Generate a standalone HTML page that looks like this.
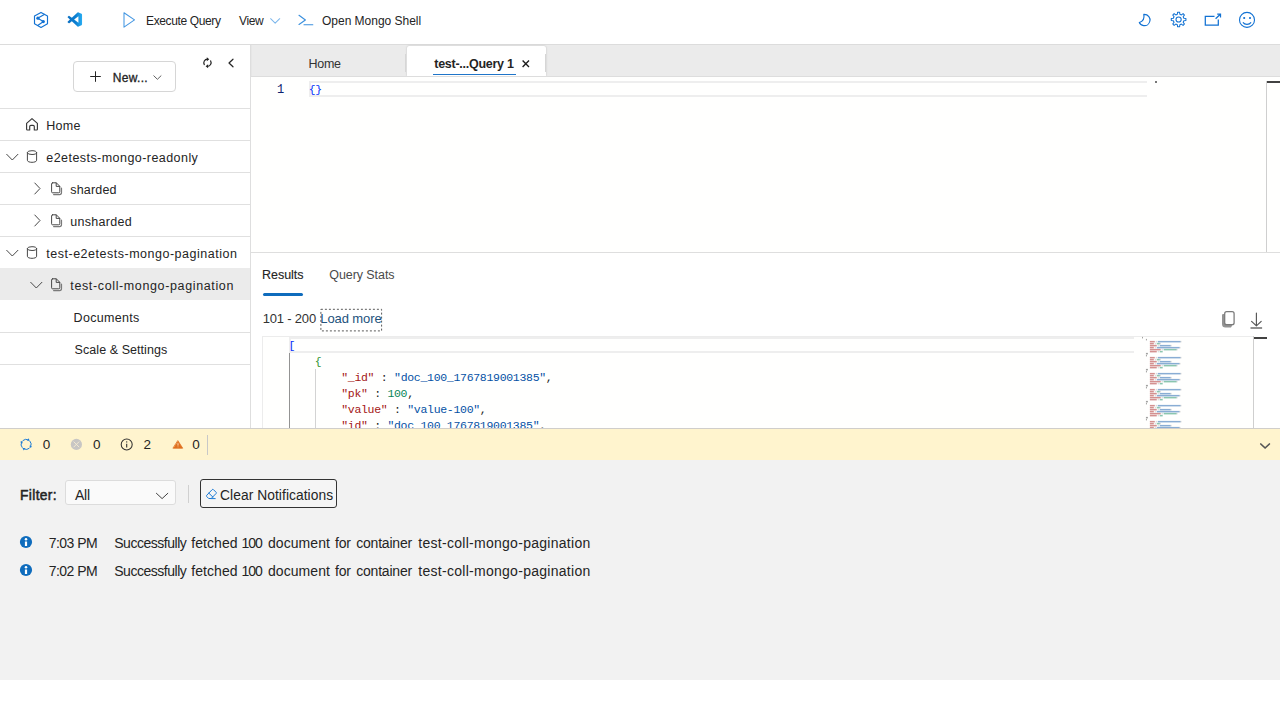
<!DOCTYPE html>
<html><head><meta charset="utf-8"><title>Data Explorer</title>
<style>
*{box-sizing:border-box;margin:0;padding:0}
html,body{width:1280px;height:720px;overflow:hidden;background:#fff;font-family:"Liberation Sans",sans-serif}
.a{position:absolute}
.t{position:absolute;white-space:pre;line-height:20px;font-family:"Liberation Sans",sans-serif}
.t.m{font-family:"Liberation Mono",monospace}
svg{position:absolute;overflow:visible}
.row{position:absolute;left:0;width:250px;height:1px;background:#e0e0e0}
.code{position:absolute;font:11.5px/16px "Liberation Mono",monospace;letter-spacing:-0.3px;white-space:pre;color:#222}
.k{color:#a31515}.s{color:#0451a5}.n{color:#098658}
</style></head><body>
<!-- top command bar -->
<div class="a" style="left:0;top:0;width:1280px;height:44px;background:#fff"></div>
<div class="a" style="left:0;top:44px;width:1280px;height:1px;background:#dcdcdc"></div>

<!-- sidebar -->
<div class="a" style="left:0;top:45px;width:250px;height:383px;background:#fff"></div>
<div class="a" style="left:250px;top:45px;width:1px;height:383px;background:#dedede"></div><div class="a" style="left:251px;top:45px;width:1px;height:32px;background:#e6e6e6"></div>
<div class="a" style="left:73px;top:61px;width:103px;height:31px;border:1px solid #d6d6d6;border-radius:4px;background:#fff"></div>
<div class="a" style="left:0;top:268px;width:250px;height:32px;background:#ebebeb"></div>
<div class="row" style="top:108px"></div><div class="row" style="top:140px"></div><div class="row" style="top:172px"></div>
<div class="row" style="top:204px"></div><div class="row" style="top:236px"></div>
<div class="row" style="top:332px"></div><div class="row" style="top:364px"></div>

<!-- tab strip -->
<div class="a" style="left:252px;top:45px;width:1028px;height:31px;background:#ebebeb"></div>
<div class="a" style="left:407px;top:46px;width:139px;height:30px;background:#fff;border-radius:2px 2px 0 0;box-shadow:0 0 2px rgba(0,0,0,.22)"></div>
<div class="a" style="left:251px;top:76px;width:1029px;height:1px;background:#dddddd"></div><div class="a" style="left:405px;top:54px;width:1px;height:18px;background:#d6d6d6"></div><div class="a" style="left:545px;top:54px;width:1px;height:18px;background:#d6d6d6"></div><div class="a" style="left:433.3px;top:73.5px;width:82.4px;height:1.45px;background:#1f75c9"></div>

<!-- query editor -->
<div class="a" style="left:251px;top:77px;width:1029px;height:175px;background:#fffffe"></div>
<div class="a" style="left:309px;top:81px;width:838px;height:16px;border:2px solid #eeeeee;border-right:none"></div>
<div class="a" style="left:1155px;top:81px;width:2px;height:2px;background:#777"></div>
<div class="a" style="left:1266px;top:81px;width:1px;height:171px;background:#cfcfcf"></div>
<div class="a" style="left:1267px;top:81px;width:13px;height:2px;background:#424242"></div>
<div class="a" style="left:251px;top:252px;width:1029px;height:1px;background:#dedede"></div>

<!-- results -->
<div class="a" style="left:262.5px;top:293px;width:40.5px;height:3px;border-radius:2px;background:#0f6cbd"></div>
<svg style="left:0;top:0" width="1280" height="720"><rect x="320.9" y="309.3" width="60.7" height="21.6" fill="none" stroke="#5a5a5a" stroke-width="1" stroke-dasharray="2 2"/></svg>

<!-- results editor -->
<div class="a" style="left:262px;top:336px;width:1005px;height:92px;overflow:hidden">
  <div class="a" style="left:0;top:0;width:991px;height:92px;background:#fffffe;border-top:1px solid #ececec;border-left:1px solid #ececec"></div>
  <div class="a" style="left:27px;top:1px;width:845px;height:16px;border:2px solid #eeeeee;border-right:none"></div>
  <div class="a" style="left:27px;top:17px;width:1px;height:80px;background:#939393"></div>
  <div class="a" style="left:53px;top:33px;width:1px;height:64px;background:#d3d3d3"></div>
  <div class="code" style="left:26.4px;top:2px"><span style="color:#0431fa">[</span>
    <span style="color:#319331">{</span>
        <span class="k">"_id"</span> : <span class="s">"doc_100_1767819001385"</span>,
        <span class="k">"pk"</span> : <span class="n">100</span>,
        <span class="k">"value"</span> : <span class="s">"value-100"</span>,
        <span class="k">"id"</span> : <span class="s">"doc_100_1767819001385"</span>,
        <span class="k">"timestamp"</span> : <span class="n">1767819001385</span>,</div>
  <svg style="left:880px;top:0" width="110" height="92" viewBox="0 0 110 92"><rect x="0.00" y="0.9" width="0.98" height="1.5" fill="#444" opacity="0.5"/><rect x="3.94" y="2.9" width="0.98" height="1.5" fill="#444" opacity="0.5"/><rect x="7.88" y="4.9" width="4.92" height="1.5" fill="#a31515" opacity="0.47"/><rect x="13.79" y="4.9" width="0.98" height="1.5" fill="#333333" opacity="0.22"/><rect x="15.76" y="4.9" width="22.66" height="1.5" fill="#0451a5" opacity="0.47"/><rect x="38.41" y="4.9" width="0.98" height="1.5" fill="#333333" opacity="0.22"/><rect x="7.88" y="6.9" width="3.94" height="1.5" fill="#a31515" opacity="0.47"/><rect x="12.80" y="6.9" width="0.98" height="1.5" fill="#333333" opacity="0.22"/><rect x="14.78" y="6.9" width="2.96" height="1.5" fill="#098658" opacity="0.47"/><rect x="17.73" y="6.9" width="0.98" height="1.5" fill="#333333" opacity="0.22"/><rect x="7.88" y="8.9" width="6.89" height="1.5" fill="#a31515" opacity="0.47"/><rect x="15.76" y="8.9" width="0.98" height="1.5" fill="#333333" opacity="0.22"/><rect x="17.73" y="8.9" width="10.83" height="1.5" fill="#0451a5" opacity="0.47"/><rect x="28.57" y="8.9" width="0.98" height="1.5" fill="#333333" opacity="0.22"/><rect x="7.88" y="10.9" width="3.94" height="1.5" fill="#a31515" opacity="0.47"/><rect x="12.80" y="10.9" width="0.98" height="1.5" fill="#333333" opacity="0.22"/><rect x="14.78" y="10.9" width="22.66" height="1.5" fill="#0451a5" opacity="0.47"/><rect x="37.43" y="10.9" width="0.98" height="1.5" fill="#333333" opacity="0.22"/><rect x="7.88" y="12.9" width="10.83" height="1.5" fill="#a31515" opacity="0.47"/><rect x="19.70" y="12.9" width="0.98" height="1.5" fill="#333333" opacity="0.22"/><rect x="21.67" y="12.9" width="12.80" height="1.5" fill="#098658" opacity="0.47"/><rect x="34.48" y="12.9" width="0.98" height="1.5" fill="#333333" opacity="0.22"/><rect x="7.88" y="14.9" width="6.89" height="1.5" fill="#a31515" opacity="0.47"/><rect x="15.76" y="14.9" width="0.98" height="1.5" fill="#333333" opacity="0.22"/><rect x="17.73" y="14.9" width="2.96" height="1.5" fill="#098658" opacity="0.47"/><rect x="3.94" y="16.9" width="1.97" height="1.5" fill="#444" opacity="0.5"/><rect x="3.94" y="18.9" width="0.98" height="1.5" fill="#444" opacity="0.5"/><rect x="7.88" y="20.9" width="4.92" height="1.5" fill="#a31515" opacity="0.47"/><rect x="13.79" y="20.9" width="0.98" height="1.5" fill="#333333" opacity="0.22"/><rect x="15.76" y="20.9" width="22.66" height="1.5" fill="#0451a5" opacity="0.47"/><rect x="38.41" y="20.9" width="0.98" height="1.5" fill="#333333" opacity="0.22"/><rect x="7.88" y="22.9" width="3.94" height="1.5" fill="#a31515" opacity="0.47"/><rect x="12.80" y="22.9" width="0.98" height="1.5" fill="#333333" opacity="0.22"/><rect x="14.78" y="22.9" width="2.96" height="1.5" fill="#098658" opacity="0.47"/><rect x="17.73" y="22.9" width="0.98" height="1.5" fill="#333333" opacity="0.22"/><rect x="7.88" y="24.9" width="6.89" height="1.5" fill="#a31515" opacity="0.47"/><rect x="15.76" y="24.9" width="0.98" height="1.5" fill="#333333" opacity="0.22"/><rect x="17.73" y="24.9" width="10.83" height="1.5" fill="#0451a5" opacity="0.47"/><rect x="28.57" y="24.9" width="0.98" height="1.5" fill="#333333" opacity="0.22"/><rect x="7.88" y="26.9" width="3.94" height="1.5" fill="#a31515" opacity="0.47"/><rect x="12.80" y="26.9" width="0.98" height="1.5" fill="#333333" opacity="0.22"/><rect x="14.78" y="26.9" width="22.66" height="1.5" fill="#0451a5" opacity="0.47"/><rect x="37.43" y="26.9" width="0.98" height="1.5" fill="#333333" opacity="0.22"/><rect x="7.88" y="28.9" width="10.83" height="1.5" fill="#a31515" opacity="0.47"/><rect x="19.70" y="28.9" width="0.98" height="1.5" fill="#333333" opacity="0.22"/><rect x="21.67" y="28.9" width="12.80" height="1.5" fill="#098658" opacity="0.47"/><rect x="34.48" y="28.9" width="0.98" height="1.5" fill="#333333" opacity="0.22"/><rect x="7.88" y="30.9" width="6.89" height="1.5" fill="#a31515" opacity="0.47"/><rect x="15.76" y="30.9" width="0.98" height="1.5" fill="#333333" opacity="0.22"/><rect x="17.73" y="30.9" width="2.96" height="1.5" fill="#098658" opacity="0.47"/><rect x="3.94" y="32.9" width="1.97" height="1.5" fill="#444" opacity="0.5"/><rect x="3.94" y="34.9" width="0.98" height="1.5" fill="#444" opacity="0.5"/><rect x="7.88" y="36.9" width="4.92" height="1.5" fill="#a31515" opacity="0.47"/><rect x="13.79" y="36.9" width="0.98" height="1.5" fill="#333333" opacity="0.22"/><rect x="15.76" y="36.9" width="22.66" height="1.5" fill="#0451a5" opacity="0.47"/><rect x="38.41" y="36.9" width="0.98" height="1.5" fill="#333333" opacity="0.22"/><rect x="7.88" y="38.9" width="3.94" height="1.5" fill="#a31515" opacity="0.47"/><rect x="12.80" y="38.9" width="0.98" height="1.5" fill="#333333" opacity="0.22"/><rect x="14.78" y="38.9" width="2.96" height="1.5" fill="#098658" opacity="0.47"/><rect x="17.73" y="38.9" width="0.98" height="1.5" fill="#333333" opacity="0.22"/><rect x="7.88" y="40.9" width="6.89" height="1.5" fill="#a31515" opacity="0.47"/><rect x="15.76" y="40.9" width="0.98" height="1.5" fill="#333333" opacity="0.22"/><rect x="17.73" y="40.9" width="10.83" height="1.5" fill="#0451a5" opacity="0.47"/><rect x="28.57" y="40.9" width="0.98" height="1.5" fill="#333333" opacity="0.22"/><rect x="7.88" y="42.9" width="3.94" height="1.5" fill="#a31515" opacity="0.47"/><rect x="12.80" y="42.9" width="0.98" height="1.5" fill="#333333" opacity="0.22"/><rect x="14.78" y="42.9" width="22.66" height="1.5" fill="#0451a5" opacity="0.47"/><rect x="37.43" y="42.9" width="0.98" height="1.5" fill="#333333" opacity="0.22"/><rect x="7.88" y="44.9" width="10.83" height="1.5" fill="#a31515" opacity="0.47"/><rect x="19.70" y="44.9" width="0.98" height="1.5" fill="#333333" opacity="0.22"/><rect x="21.67" y="44.9" width="12.80" height="1.5" fill="#098658" opacity="0.47"/><rect x="34.48" y="44.9" width="0.98" height="1.5" fill="#333333" opacity="0.22"/><rect x="7.88" y="46.9" width="6.89" height="1.5" fill="#a31515" opacity="0.47"/><rect x="15.76" y="46.9" width="0.98" height="1.5" fill="#333333" opacity="0.22"/><rect x="17.73" y="46.9" width="2.96" height="1.5" fill="#098658" opacity="0.47"/><rect x="3.94" y="48.9" width="1.97" height="1.5" fill="#444" opacity="0.5"/><rect x="3.94" y="50.9" width="0.98" height="1.5" fill="#444" opacity="0.5"/><rect x="7.88" y="52.9" width="4.92" height="1.5" fill="#a31515" opacity="0.47"/><rect x="13.79" y="52.9" width="0.98" height="1.5" fill="#333333" opacity="0.22"/><rect x="15.76" y="52.9" width="22.66" height="1.5" fill="#0451a5" opacity="0.47"/><rect x="38.41" y="52.9" width="0.98" height="1.5" fill="#333333" opacity="0.22"/><rect x="7.88" y="54.9" width="3.94" height="1.5" fill="#a31515" opacity="0.47"/><rect x="12.80" y="54.9" width="0.98" height="1.5" fill="#333333" opacity="0.22"/><rect x="14.78" y="54.9" width="2.96" height="1.5" fill="#098658" opacity="0.47"/><rect x="17.73" y="54.9" width="0.98" height="1.5" fill="#333333" opacity="0.22"/><rect x="7.88" y="56.9" width="6.89" height="1.5" fill="#a31515" opacity="0.47"/><rect x="15.76" y="56.9" width="0.98" height="1.5" fill="#333333" opacity="0.22"/><rect x="17.73" y="56.9" width="10.83" height="1.5" fill="#0451a5" opacity="0.47"/><rect x="28.57" y="56.9" width="0.98" height="1.5" fill="#333333" opacity="0.22"/><rect x="7.88" y="58.9" width="3.94" height="1.5" fill="#a31515" opacity="0.47"/><rect x="12.80" y="58.9" width="0.98" height="1.5" fill="#333333" opacity="0.22"/><rect x="14.78" y="58.9" width="22.66" height="1.5" fill="#0451a5" opacity="0.47"/><rect x="37.43" y="58.9" width="0.98" height="1.5" fill="#333333" opacity="0.22"/><rect x="7.88" y="60.9" width="10.83" height="1.5" fill="#a31515" opacity="0.47"/><rect x="19.70" y="60.9" width="0.98" height="1.5" fill="#333333" opacity="0.22"/><rect x="21.67" y="60.9" width="12.80" height="1.5" fill="#098658" opacity="0.47"/><rect x="34.48" y="60.9" width="0.98" height="1.5" fill="#333333" opacity="0.22"/><rect x="7.88" y="62.9" width="6.89" height="1.5" fill="#a31515" opacity="0.47"/><rect x="15.76" y="62.9" width="0.98" height="1.5" fill="#333333" opacity="0.22"/><rect x="17.73" y="62.9" width="2.96" height="1.5" fill="#098658" opacity="0.47"/><rect x="3.94" y="64.9" width="1.97" height="1.5" fill="#444" opacity="0.5"/><rect x="3.94" y="66.9" width="0.98" height="1.5" fill="#444" opacity="0.5"/><rect x="7.88" y="68.9" width="4.92" height="1.5" fill="#a31515" opacity="0.47"/><rect x="13.79" y="68.9" width="0.98" height="1.5" fill="#333333" opacity="0.22"/><rect x="15.76" y="68.9" width="22.66" height="1.5" fill="#0451a5" opacity="0.47"/><rect x="38.41" y="68.9" width="0.98" height="1.5" fill="#333333" opacity="0.22"/><rect x="7.88" y="70.9" width="3.94" height="1.5" fill="#a31515" opacity="0.47"/><rect x="12.80" y="70.9" width="0.98" height="1.5" fill="#333333" opacity="0.22"/><rect x="14.78" y="70.9" width="2.96" height="1.5" fill="#098658" opacity="0.47"/><rect x="17.73" y="70.9" width="0.98" height="1.5" fill="#333333" opacity="0.22"/><rect x="7.88" y="72.9" width="6.89" height="1.5" fill="#a31515" opacity="0.47"/><rect x="15.76" y="72.9" width="0.98" height="1.5" fill="#333333" opacity="0.22"/><rect x="17.73" y="72.9" width="10.83" height="1.5" fill="#0451a5" opacity="0.47"/><rect x="28.57" y="72.9" width="0.98" height="1.5" fill="#333333" opacity="0.22"/><rect x="7.88" y="74.9" width="3.94" height="1.5" fill="#a31515" opacity="0.47"/><rect x="12.80" y="74.9" width="0.98" height="1.5" fill="#333333" opacity="0.22"/><rect x="14.78" y="74.9" width="22.66" height="1.5" fill="#0451a5" opacity="0.47"/><rect x="37.43" y="74.9" width="0.98" height="1.5" fill="#333333" opacity="0.22"/><rect x="7.88" y="76.9" width="10.83" height="1.5" fill="#a31515" opacity="0.47"/><rect x="19.70" y="76.9" width="0.98" height="1.5" fill="#333333" opacity="0.22"/><rect x="21.67" y="76.9" width="12.80" height="1.5" fill="#098658" opacity="0.47"/><rect x="34.48" y="76.9" width="0.98" height="1.5" fill="#333333" opacity="0.22"/><rect x="7.88" y="78.9" width="6.89" height="1.5" fill="#a31515" opacity="0.47"/><rect x="15.76" y="78.9" width="0.98" height="1.5" fill="#333333" opacity="0.22"/><rect x="17.73" y="78.9" width="2.96" height="1.5" fill="#098658" opacity="0.47"/><rect x="3.94" y="80.9" width="1.97" height="1.5" fill="#444" opacity="0.5"/><rect x="3.94" y="82.9" width="0.98" height="1.5" fill="#444" opacity="0.5"/><rect x="7.88" y="84.9" width="4.92" height="1.5" fill="#a31515" opacity="0.47"/><rect x="13.79" y="84.9" width="0.98" height="1.5" fill="#333333" opacity="0.22"/><rect x="15.76" y="84.9" width="22.66" height="1.5" fill="#0451a5" opacity="0.47"/><rect x="38.41" y="84.9" width="0.98" height="1.5" fill="#333333" opacity="0.22"/><rect x="7.88" y="86.9" width="3.94" height="1.5" fill="#a31515" opacity="0.47"/><rect x="12.80" y="86.9" width="0.98" height="1.5" fill="#333333" opacity="0.22"/><rect x="14.78" y="86.9" width="2.96" height="1.5" fill="#098658" opacity="0.47"/><rect x="17.73" y="86.9" width="0.98" height="1.5" fill="#333333" opacity="0.22"/><rect x="7.88" y="88.9" width="6.89" height="1.5" fill="#a31515" opacity="0.47"/><rect x="15.76" y="88.9" width="0.98" height="1.5" fill="#333333" opacity="0.22"/><rect x="17.73" y="88.9" width="10.83" height="1.5" fill="#0451a5" opacity="0.47"/><rect x="28.57" y="88.9" width="0.98" height="1.5" fill="#333333" opacity="0.22"/><rect x="7.88" y="90.9" width="3.94" height="1.5" fill="#a31515" opacity="0.47"/><rect x="12.80" y="90.9" width="0.98" height="1.5" fill="#333333" opacity="0.22"/><rect x="14.78" y="90.9" width="22.66" height="1.5" fill="#0451a5" opacity="0.47"/><rect x="37.43" y="90.9" width="0.98" height="1.5" fill="#333333" opacity="0.22"/></svg>
  <div class="a" style="left:991px;top:0;width:1px;height:92px;background:#cfcfcf"></div>
  <div class="a" style="left:992px;top:1px;width:13px;height:2px;background:#424242"></div>
</div>

<!-- notification status bar -->
<div class="a" style="left:0;top:428px;width:1280px;height:32px;background:#fff4ce;border-top:1px solid #d0cecb"></div>
<div class="a" style="left:207px;top:435px;width:1px;height:20px;background:#c8c8c8"></div>

<!-- console -->
<div class="a" style="left:0;top:460px;width:1280px;height:220px;background:#f2f2f2"></div>
<div class="a" style="left:65px;top:480px;width:111px;height:25px;border:1px solid #dcdcdc;border-radius:3px;background:#fafafa"></div>
<div class="a" style="left:188px;top:485px;width:1px;height:18px;background:#d0d0d0"></div>
<div class="a" style="left:200.3px;top:479.2px;width:137.2px;height:29px;border:1px solid #333;border-radius:3px;background:#f5f5f5"></div>

<svg style="left:0;top:0" width="1280" height="720" viewBox="0 0 1280 720" fill="none" stroke-linecap="round" stroke-linejoin="round">
<defs>
<linearGradient id="vg" x1="0" y1="0" x2="1" y2="0"><stop offset="0" stop-color="#0a6fc2"/><stop offset="0.55" stop-color="#0b7ed0"/><stop offset="1" stop-color="#29adf2"/></linearGradient>
</defs>
<!-- synapse-like hex icon -->
<g stroke="#1272d3" stroke-width="1.15">
<path d="M41 12.4 L47.5 16.1 V23.7 L41 27.4 L34.5 23.7 V16.1 Z"/>
<path d="M44.3 14.4 L37.6 18.2 L43.5 21.6 L37.7 25.4"/>
</g>
<circle cx="37.9" cy="18.2" r="1.6" fill="#1272d3"/><circle cx="43.3" cy="21.6" r="1.6" fill="#1272d3"/>
<!-- vscode -->
<g transform="translate(67.6 12.3) scale(0.1445)">
<path fill="url(#vg)" d="M96.46 10.8 75.86.9a6.23 6.23 0 0 0-7.1 1.2L29.35 38.04 12.19 25.01a4.16 4.16 0 0 0-5.32.24l-5.5 5.01a4.17 4.17 0 0 0 0 6.16L16.25 50 1.36 63.58a4.17 4.17 0 0 0 0 6.16l5.5 5a4.16 4.16 0 0 0 5.33.24l17.16-13.03L68.77 97.9a6.22 6.22 0 0 0 7.1 1.2l20.6-9.9A6.25 6.25 0 0 0 100 83.56V16.44a6.25 6.25 0 0 0-3.54-5.63ZM75.02 72.7 45.1 50l29.9-22.7Z"/>
</g>
<!-- play -->
<path d="M124 12.8 L134.5 19.9 L124 27.1 Z" stroke="#4497e2" stroke-width="1.05"/>
<!-- view chevron -->
<path d="M270.6 18.7 L275.15 23.1 L279.7 18.7" stroke="#7db7ec" stroke-width="1.05"/>
<!-- shell -->
<path d="M299 15.3 L305.4 20 L299 24.5 M304 24.7 H312.8" stroke="#3b90de" stroke-width="1.15"/>
<!-- moon -->
<path d="M1143.8 14.4 C1148.5 14.2 1150.6 18.2 1149.9 21 C1149.2 24.3 1146.3 26 1143.6 25.6 C1141.4 25.3 1139.9 24.1 1139.3 22.5 C1142.8 21.5 1144.6 18.5 1143.8 14.4 Z" stroke="#1272d3" stroke-width="1.15"/>
<!-- gear -->
<g stroke="#1272d3" stroke-width="1.05">
<circle cx="1178.6" cy="19.5" r="2.6"/>
<path d="M1177.34 14.25 L1177.61 12.17 L1179.59 12.17 L1179.86 14.25 L1181.42 14.90 L1183.09 13.62 L1184.48 15.01 L1183.20 16.68 L1183.85 18.24 L1185.93 18.51 L1185.93 20.49 L1183.85 20.76 L1183.20 22.32 L1184.48 23.99 L1183.09 25.38 L1181.42 24.10 L1179.86 24.75 L1179.59 26.83 L1177.61 26.83 L1177.34 24.75 L1175.78 24.10 L1174.11 25.38 L1172.72 23.99 L1174.00 22.32 L1173.35 20.76 L1171.27 20.49 L1171.27 18.51 L1173.35 18.24 L1174.00 16.68 L1172.72 15.01 L1174.11 13.62 L1175.78 14.90 Z"/>
</g>
<!-- open in new -->
<g stroke="#1272d3" stroke-width="1.25" stroke-linecap="butt" stroke-linejoin="miter">
<path d="M1214.5 16.4 H1205.3 V25 H1218.3 V19.5"/>
<path d="M1215.6 18.8 L1220.3 14.3 M1217.2 14.2 H1220.5 V17.5"/>
</g>
<!-- smiley -->
<g stroke="#1272d3" stroke-width="1.1">
<circle cx="1247" cy="19.9" r="7.5"/>
<path d="M1243.2 22.6 C1244.6 24.9 1249.4 24.9 1250.8 22.6"/>
</g>
<rect x="1243.3" y="17.1" width="1.8" height="1.8" fill="#1272d3"/><rect x="1249.1" y="17.1" width="1.8" height="1.8" fill="#1272d3"/>

<!-- New button: plus, chevron -->
<path d="M95.5 71.3 V81.8 M90.2 76.5 H100.8" stroke="#242424" stroke-width="1" stroke-linecap="butt"/>
<path d="M153.8 75.8 L157.4 79.3 L161 75.8" stroke="#616161" stroke-width="1"/>
<!-- refresh -->
<g stroke="#242424" stroke-width="1.2">
<path d="M204.3 64.6 A3.6 3.6 0 0 1 207.4 59.2"/>
<path d="M210.6 60.9 A3.6 3.6 0 0 1 207.5 66.3"/>
</g>
<path d="M206.8 57.3 L209.3 59.3 L206.8 61.2 Z M208.1 64.3 L205.6 66.3 L208.1 68.2 Z" fill="#242424"/>
<!-- collapse -->
<path d="M233 59.2 L229 63 L233 66.8" stroke="#242424" stroke-width="1.2"/>

<!-- tree icons -->
<g stroke="#484848" stroke-width="1">
<!-- home -->
<path stroke="#383838" stroke-width="1.15" d="M26.6 123.4 L32 118.6 L37.4 123.4 V129.2 Q37.4 130 36.6 130 H34.3 V126.6 Q34.3 125.4 33.1 125.4 H30.9 Q29.7 125.4 29.7 126.6 V130 H27.4 Q26.6 130 26.6 129.2 Z"/>
<!-- chevrons down -->
<path d="M6.7 154.3 L12.3 160 L17.9 154.3"/>
<path d="M6.7 250.3 L12.3 256 L17.9 250.3"/>
<path d="M30.7 282.3 L36.3 288 L41.9 282.3"/>
<!-- chevrons right -->
<path d="M34.8 183 L40 188.5 L34.8 194"/>
<path d="M34.8 215 L40 220.5 L34.8 226"/>
<!-- db -->
<g id="db1"><ellipse cx="32" cy="152.6" rx="4.6" ry="1.9"/><path d="M27.4 152.6 V160.3 C27.4 163 36.6 163 36.6 160.3 V152.6"/></g>
<g transform="translate(0 96)"><ellipse cx="32" cy="152.6" rx="4.6" ry="1.9"/><path d="M27.4 152.6 V160.3 C27.4 163 36.6 163 36.6 160.3 V152.6"/></g>
<!-- docs -->
<g id="doc"><path d="M52.6 182.8 H56.3 L59.8 186.3 V191.8 Q59.8 192.8 58.8 192.8 H52.6 Q51.6 192.8 51.6 191.8 V183.8 Q51.6 182.8 52.6 182.8 Z M56.2 183 V186.4 H59.6"/><path d="M53.6 194.6 H59.6 Q61.5 194.6 61.5 192.6 V188.2" stroke-width="1.2" stroke="#7a7a7a"/></g>
<use href="#doc" y="32"/><use href="#doc" y="96"/>
</g>
<!-- tab close -->
<path d="M522.6 60.6 L529 67 M529 60.6 L522.6 67" stroke="#1b1b1b" stroke-width="1.35" stroke-linecap="butt"/>

<!-- copy / download -->
<g stroke-linecap="round" stroke-linejoin="round">
<path d="M1222 315 Q1222 313.9 1223.2 313.9 H1226 V324 H1233 L1231 327.5 H1225.5 Q1222 327.5 1222 324 Z" fill="#939393" stroke="none"/>
<rect x="1224.7" y="311.7" width="9.4" height="13" rx="2" fill="#fff" stroke="#7a7a7a" stroke-width="1.25"/>
<path d="M1256.4 313 V325.4 M1251.6 321.3 L1256.4 325.9 L1261.2 321.3" stroke="#555" stroke-width="1.15"/>
<path d="M1250.5 328 H1262.1" stroke="#8c8c8c" stroke-width="1.9" stroke-linecap="butt"/>
</g>

<!-- status icons -->
<g stroke="#1a7ad6" stroke-width="1" stroke-linecap="butt"><path d="M22.75 440.68 A5.0 5.0 0 0 1 28.45 439.99"/><path d="M29.82 441.05 A5.0 5.0 0 0 1 30.51 446.75"/><path d="M29.45 448.12 A5.0 5.0 0 0 1 23.75 448.81"/><path d="M22.38 447.75 A5.0 5.0 0 0 1 21.69 442.05"/><path d="M29.77 440.69 L28.40 438.37 L27.08 440.85 Z" fill="#1a7ad6" stroke="none"/><path d="M29.81 448.07 L32.13 446.70 L29.65 445.38 Z" fill="#1a7ad6" stroke="none"/><path d="M22.43 448.11 L23.80 450.43 L25.12 447.95 Z" fill="#1a7ad6" stroke="none"/><path d="M22.39 440.73 L20.07 442.10 L22.55 443.42 Z" fill="#1a7ad6" stroke="none"/></g>
<circle cx="76.4" cy="444.4" r="5.6" fill="#c8c6c4"/>
<path d="M73.9 441.9 L78.9 446.9 M78.9 441.9 L73.9 446.9" stroke="#f6ecd2" stroke-width="0.9"/>
<circle cx="126.7" cy="444.5" r="5.5" stroke="#323130" stroke-width="1.05"/>
<path d="M126.7 443.8 V447.6" stroke="#323130" stroke-width="1.1" stroke-linecap="butt"/><circle cx="126.7" cy="441.9" r="0.7" fill="#323130"/>
<path d="M178 440.9 L182.7 448.2 H173.3 Z" fill="#e0701f" stroke="#e0701f" stroke-width="0.8"/>
<path d="M178 443.2 V445.6 M178 446.6 V447.2" stroke="#fde3c4" stroke-width="0.9" stroke-linecap="butt"/>
<path d="M1260.8 444 L1265.1 448 L1269.4 444" stroke="#555" stroke-width="1.7"/>

<!-- dropdown chevron -->
<path d="M156.4 493.3 L162.1 498.6 L167.8 493.3" stroke="#424242" stroke-width="1"/>
<!-- eraser -->
<g stroke="#1a7ad6" stroke-width="1">
<path d="M212.3 489.5 Q212.8 489 213.3 489.5 L216.2 492.4 Q216.7 492.9 216.2 493.4 L211.2 498.5 H208.7 L206.6 496.4 Q206.1 495.9 206.6 495.4 Z M208.9 493.2 L213 497.2 M211 498.6 H215.2"/>
</g>
<!-- info filled -->
<g id="inf"><circle cx="26" cy="542" r="6.1" fill="#0f6cbd"/><rect x="24.9" y="541.5" width="2.2" height="4.5" fill="#fff"/><circle cx="26" cy="539.2" r="1.25" fill="#fff"/></g>
<use href="#inf" y="28"/>
</svg>

<span class="t" style="left:146.00px;top:10.74px;font-size:12px;color:#242424;letter-spacing:-0.364px;">Execute Query</span>
<span class="t" style="left:239.00px;top:10.74px;font-size:12px;color:#242424;letter-spacing:-0.376px;">View</span>
<span class="t" style="left:322.00px;top:10.74px;font-size:12px;color:#242424;letter-spacing:-0.015px;">Open Mongo Shell</span>
<span class="t" style="left:112.70px;top:68.24px;font-size:12px;color:#242424;letter-spacing:0.318px;-webkit-text-stroke:0.3px #242424;">New...</span>
<span class="t" style="left:46.20px;top:115.57px;font-size:12.5px;color:#242424;letter-spacing:0.269px;">Home</span>
<span class="t" style="left:46.30px;top:148.17px;font-size:12.5px;color:#242424;letter-spacing:0.446px;">e2etests-mongo-readonly</span>
<span class="t" style="left:70.30px;top:180.17px;font-size:12.5px;color:#242424;letter-spacing:0.180px;">sharded</span>
<span class="t" style="left:70.30px;top:212.17px;font-size:12.5px;color:#242424;letter-spacing:0.297px;">unsharded</span>
<span class="t" style="left:46.30px;top:244.17px;font-size:12.5px;color:#242424;letter-spacing:0.509px;">test-e2etests-mongo-pagination</span>
<span class="t" style="left:70.30px;top:276.17px;font-size:12.5px;color:#242424;letter-spacing:0.630px;">test-coll-mongo-pagination</span>
<span class="t" style="left:73.60px;top:307.97px;font-size:12.5px;color:#242424;letter-spacing:0.304px;">Documents</span>
<span class="t" style="left:74.60px;top:340.07px;font-size:12.5px;color:#242424;letter-spacing:0.062px;">Scale &amp; Settings</span>
<span class="t" style="left:308.50px;top:54.07px;font-size:12.5px;color:#333;letter-spacing:-0.297px;">Home</span>
<span class="t" style="left:434.25px;top:54.07px;font-size:12.5px;font-weight:700;color:#242424;letter-spacing:-0.261px;">test-...Query 1</span>
<span class="t m" style="left:277.10px;top:80.20px;font-size:12px;color:#0b216f;letter-spacing:0.000px;">1</span>
<span class="t m" style="left:308.70px;top:80.34px;font-size:11.5px;color:#0431fa;letter-spacing:0.000px;letter-spacing:-0.3px;">{}</span>
<span class="t" style="left:262.10px;top:264.67px;font-size:12.5px;color:#242424;letter-spacing:-0.038px;-webkit-text-stroke:0.12px #242424;">Results</span>
<span class="t" style="left:329.30px;top:264.67px;font-size:12.5px;color:#4a4a4a;letter-spacing:-0.075px;">Query Stats</span>
<span class="t" style="left:262.75px;top:309.10px;font-size:13px;color:#333;letter-spacing:-0.194px;">101 - 200</span>
<span class="t" style="left:320.25px;top:309.10px;font-size:13px;color:#23527c;letter-spacing:-0.084px;">Load more</span>
<span class="t" style="left:42.70px;top:435.12px;font-size:13.5px;color:#242424;letter-spacing:0.000px;">0</span>
<span class="t" style="left:93.10px;top:435.12px;font-size:13.5px;color:#242424;letter-spacing:0.000px;">0</span>
<span class="t" style="left:143.50px;top:435.12px;font-size:13.5px;color:#242424;letter-spacing:0.000px;">2</span>
<span class="t" style="left:192.30px;top:435.12px;font-size:13.5px;color:#242424;letter-spacing:0.000px;">0</span>
<span class="t" style="left:20.00px;top:486.12px;font-size:13.8px;color:#242424;letter-spacing:0.357px;-webkit-text-stroke:0.5px #242424;">Filter:</span>
<span class="t" style="left:75.00px;top:484.75px;font-size:14px;color:#242424;letter-spacing:-0.224px;">All</span>
<span class="t" style="left:220.00px;top:485.52px;font-size:13.8px;color:#242424;letter-spacing:0.064px;">Clear Notifications</span>
<span class="t" style="left:48.75px;top:533.35px;font-size:14px;color:#242424;letter-spacing:-0.538px;">7:03 PM</span>
<span class="t" style="left:114.25px;top:533.35px;font-size:14px;color:#242424;letter-spacing:-0.482px;">Successfully</span>
<span class="t" style="left:191.25px;top:533.35px;font-size:14px;color:#242424;letter-spacing:0.060px;">fetched</span>
<span class="t" style="left:241.50px;top:533.35px;font-size:14px;color:#242424;letter-spacing:-1.036px;">100</span>
<span class="t" style="left:268.00px;top:533.35px;font-size:14px;color:#242424;letter-spacing:0.058px;">document</span>
<span class="t" style="left:335.00px;top:533.35px;font-size:14px;color:#242424;letter-spacing:-0.213px;">for</span>
<span class="t" style="left:356.25px;top:533.35px;font-size:14px;color:#242424;letter-spacing:-0.210px;">container</span>
<span class="t" style="left:418.25px;top:533.35px;font-size:14px;color:#242424;letter-spacing:0.282px;">test-coll-mongo-pagination</span>
<span class="t" style="left:48.75px;top:561.35px;font-size:14px;color:#242424;letter-spacing:-0.538px;">7:02 PM</span>
<span class="t" style="left:114.25px;top:561.35px;font-size:14px;color:#242424;letter-spacing:-0.482px;">Successfully</span>
<span class="t" style="left:191.25px;top:561.35px;font-size:14px;color:#242424;letter-spacing:0.060px;">fetched</span>
<span class="t" style="left:241.50px;top:561.35px;font-size:14px;color:#242424;letter-spacing:-1.036px;">100</span>
<span class="t" style="left:268.00px;top:561.35px;font-size:14px;color:#242424;letter-spacing:0.058px;">document</span>
<span class="t" style="left:335.00px;top:561.35px;font-size:14px;color:#242424;letter-spacing:-0.213px;">for</span>
<span class="t" style="left:356.25px;top:561.35px;font-size:14px;color:#242424;letter-spacing:-0.210px;">container</span>
<span class="t" style="left:418.25px;top:561.35px;font-size:14px;color:#242424;letter-spacing:0.282px;">test-coll-mongo-pagination</span>
</body></html>
